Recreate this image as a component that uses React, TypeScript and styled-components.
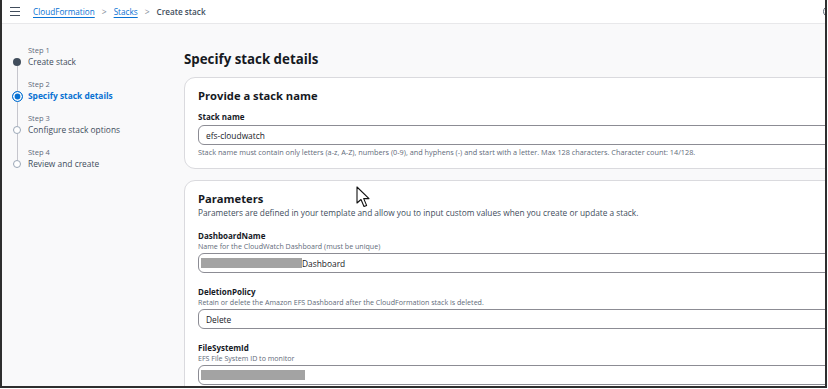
import React from 'react'
import styled, { createGlobalStyle } from 'styled-components'

const steps = [
  { label: 'Step 1', title: 'Create stack', state: 'done' },
  { label: 'Step 2', title: 'Specify stack details', state: 'active' },
  { label: 'Step 3', title: 'Configure stack options', state: 'todo' },
  { label: 'Step 4', title: 'Review and create', state: 'todo' },
]

const App = () => {
  return (
    <>
      <GlobalStyle />
      <Frame>
        <NavBar>
          <Burger>
            <span />
            <span />
            <span />
          </Burger>
          <Crumb href="#">CloudFormation</Crumb>
          <Chevron>&gt;</Chevron>
          <Crumb href="#">Stacks</Crumb>
          <Chevron>&gt;</Chevron>
          <Current>Create stack</Current>
          <EdgeIcon />
        </NavBar>

        <Body>
          <Sidebar>
            {steps.map((s, i) => (
              <Step key={s.label} $last={i === steps.length - 1}>
                <Rail>
                  <Line $size={s.state === 'active' ? 11 : 8} $hidden={i === 0} />
                  <Dot $state={s.state} />
                  <Tail $hidden={i === steps.length - 1} />
                </Rail>
                <StepText>
                  <StepLabel>{s.label}</StepLabel>
                  <StepTitle $active={s.state === 'active'}>{s.title}</StepTitle>
                </StepText>
              </Step>
            ))}
          </Sidebar>

          <Main>
            <PageTitle>Specify stack details</PageTitle>

            <Card>
              <CardTitle>Provide a stack name</CardTitle>
              <FieldLabel $first>Stack name</FieldLabel>
              <Input>efs-cloudwatch</Input>
              <Hint>
                Stack name must contain only letters (a-z, A-Z), numbers (0-9), and hyphens (-) and start with a letter. Max 128 characters. Character count: 14/128.
              </Hint>
            </Card>

            <Card $gap>
              <CardTitle>Parameters</CardTitle>
              <CardDesc>
                Parameters are defined in your template and allow you to input custom values when you create or update a stack.
              </CardDesc>

              <Field>
                <FieldLabel>DashboardName</FieldLabel>
                <FieldDesc>Name for the CloudWatch Dashboard (must be unique)</FieldDesc>
                <Input $redacted>
                  <Redact $w={101} />
                  Dashboard
                </Input>
              </Field>

              <Field>
                <FieldLabel>DeletionPolicy</FieldLabel>
                <FieldDesc>Retain or delete the Amazon EFS Dashboard after the CloudFormation stack is deleted.</FieldDesc>
                <Input>Delete</Input>
              </Field>

              <Field>
                <FieldLabel>FileSystemId</FieldLabel>
                <FieldDesc>EFS File System ID to monitor</FieldDesc>
                <Input $redacted>
                  <Redact $w={104} />
                </Input>
              </Field>
            </Card>
          </Main>
        </Body>

        <Pointer width="16" height="22" viewBox="0 0 16 22">
          <path
            d="M1 1 L1 17 L5 13.5 L8 20.5 L10.6 19.4 L7.7 12.6 L13 12.6 Z"
            fill="#fff"
            stroke="#111"
            strokeWidth="1.1"
            strokeLinejoin="round"
          />
        </Pointer>
      </Frame>
    </>
  )
}

export default App

const GlobalStyle = createGlobalStyle`
  html, body {
    margin: 0;
    padding: 0;
    background: #ffffff;
  }
  body {
    font-family: "Open Sans", "Noto Sans", sans-serif;
  }
`

const Frame = styled.div`
  position: relative;
  width: 827px;
  height: 388px;
  box-sizing: border-box;
  border: 2px solid #2e2e2e;
  border-top: none;
  overflow: hidden;
  background: #f9f9fa;
  display: flex;
  flex-direction: column;
`

const NavBar = styled.div`
  height: 24px;
  flex: none;
  box-sizing: border-box;
  background: #ffffff;
  border-bottom: 1px solid #e8e8ea;
  display: flex;
  align-items: center;
  padding-left: 8px;
  font-size: 8.2px;
`

const Burger = styled.div`
  width: 10px;
  display: flex;
  flex-direction: column;
  gap: 2.4px;
  margin-right: 13px;
  span {
    display: block;
    height: 1.3px;
    background: #414d5c;
  }
`

const Crumb = styled.a`
  color: #0972d3;
  text-decoration: underline;
  text-underline-offset: 1.5px;
`

const Chevron = styled.span`
  color: #7d8998;
  margin: 0 7px;
  font-size: 8.5px;
`

const Current = styled.span`
  color: #414d5c;
  font-weight: 600;
`

const EdgeIcon = styled.span`
  margin-left: auto;
  margin-right: -9px;
  width: 9px;
  height: 9px;
  border: 1.3px solid #5f6b7a;
  border-radius: 50%;
`

const Body = styled.div`
  display: flex;
  flex: 1;
`

const Sidebar = styled.div`
  width: 182px;
  flex: none;
  padding: 20px 0 0 4px;
  box-sizing: border-box;
`

const Step = styled.div<{ $last?: boolean }>`
  display: flex;
  height: ${p => (p.$last ? 'auto' : '34px')};
`

const Rail = styled.div`
  width: 22px;
  display: flex;
  flex-direction: column;
  align-items: center;
`

const Line = styled.div<{ $size: number; $hidden?: boolean }>`
  width: 1px;
  height: ${p => 18 - p.$size / 2}px;
  background: ${p => (p.$hidden ? 'transparent' : '#c6c6cd')};
`

const Tail = styled.div<{ $hidden?: boolean }>`
  width: 1px;
  flex: 1;
  background: ${p => (p.$hidden ? 'transparent' : '#c6c6cd')};
`

const Dot = styled.div<{ $state: string }>`
  flex: none;
  box-sizing: border-box;
  border-radius: 50%;
  width: ${p => (p.$state === 'active' ? 11 : 8)}px;
  height: ${p => (p.$state === 'active' ? 11 : 8)}px;
  background: ${p =>
    p.$state === 'done' ? '#414d5c' : p.$state === 'active' ? '#0972d3' : '#ffffff'};
  border: ${p =>
    p.$state === 'todo' ? '1px solid #9ba7b6' : p.$state === 'active' ? '1.8px solid #0972d3' : 'none'};
  box-shadow: ${p => (p.$state === 'active' ? 'inset 0 0 0 1.6px #fff' : 'none')};
`

const StepText = styled.div`
  display: flex;
  flex-direction: column;
`

const StepLabel = styled.div`
  font-size: 7.5px;
  line-height: 12px;
  color: #5f6b7a;
`

const StepTitle = styled.div<{ $active?: boolean }>`
  font-size: 8.4px;
  line-height: 12px;
  color: ${p => (p.$active ? '#0972d3' : '#414d5c')};
  font-weight: ${p => (p.$active ? 700 : 400)};
`

const Main = styled.div`
  width: 720px;
  flex: none;
  padding-top: 26px;
`

const PageTitle = styled.h1`
  margin: 0 0 9px;
  font-size: 13.3px;
  line-height: 18px;
  font-weight: 700;
  color: #16191f;
`

const Card = styled.div<{ $gap?: boolean }>`
  background: #ffffff;
  border: 1px solid #dadade;
  border-radius: 11px;
  margin-top: ${p => (p.$gap ? '11px' : '0')};
  padding: 10px 14px 11px 13px;
`

const CardTitle = styled.h2`
  margin: 0;
  font-size: 11.2px;
  line-height: 16px;
  font-weight: 700;
  color: #16191f;
`

const CardDesc = styled.div`
  font-size: 8.3px;
  line-height: 12px;
  color: #414d5c;
  margin-bottom: 11px;
`

const Field = styled.div`
  margin-bottom: 13px;
`

const FieldLabel = styled.div<{ $first?: boolean }>`
  font-size: 8px;
  line-height: 11px;
  font-weight: 700;
  color: #16191f;
  margin-top: ${p => (p.$first ? '7px' : '0')};
  margin-bottom: ${p => (p.$first ? '3px' : '0')};
`

const FieldDesc = styled.div`
  font-size: 7.1px;
  line-height: 10px;
  color: #5f6b7a;
  margin-bottom: 2px;
`

const Input = styled.div<{ $redacted?: boolean }>`
  height: 20px;
  box-sizing: border-box;
  border: 1px solid #8c8c94;
  border-radius: 6px;
  display: flex;
  align-items: center;
  padding-left: ${p => (p.$redacted ? '2px' : '7px')};
  font-size: 8.4px;
  color: #16191f;
`

const Redact = styled.span<{ $w: number }>`
  display: inline-block;
  width: ${p => p.$w}px;
  height: 10px;
  background: #a3a3a3;
`

const Hint = styled.div`
  margin-top: 2px;
  font-size: 7.3px;
  line-height: 10px;
  color: #5f6b7a;
  white-space: nowrap;
`

const Pointer = styled.svg`
  position: absolute;
  left: 354px;
  top: 186px;
`
